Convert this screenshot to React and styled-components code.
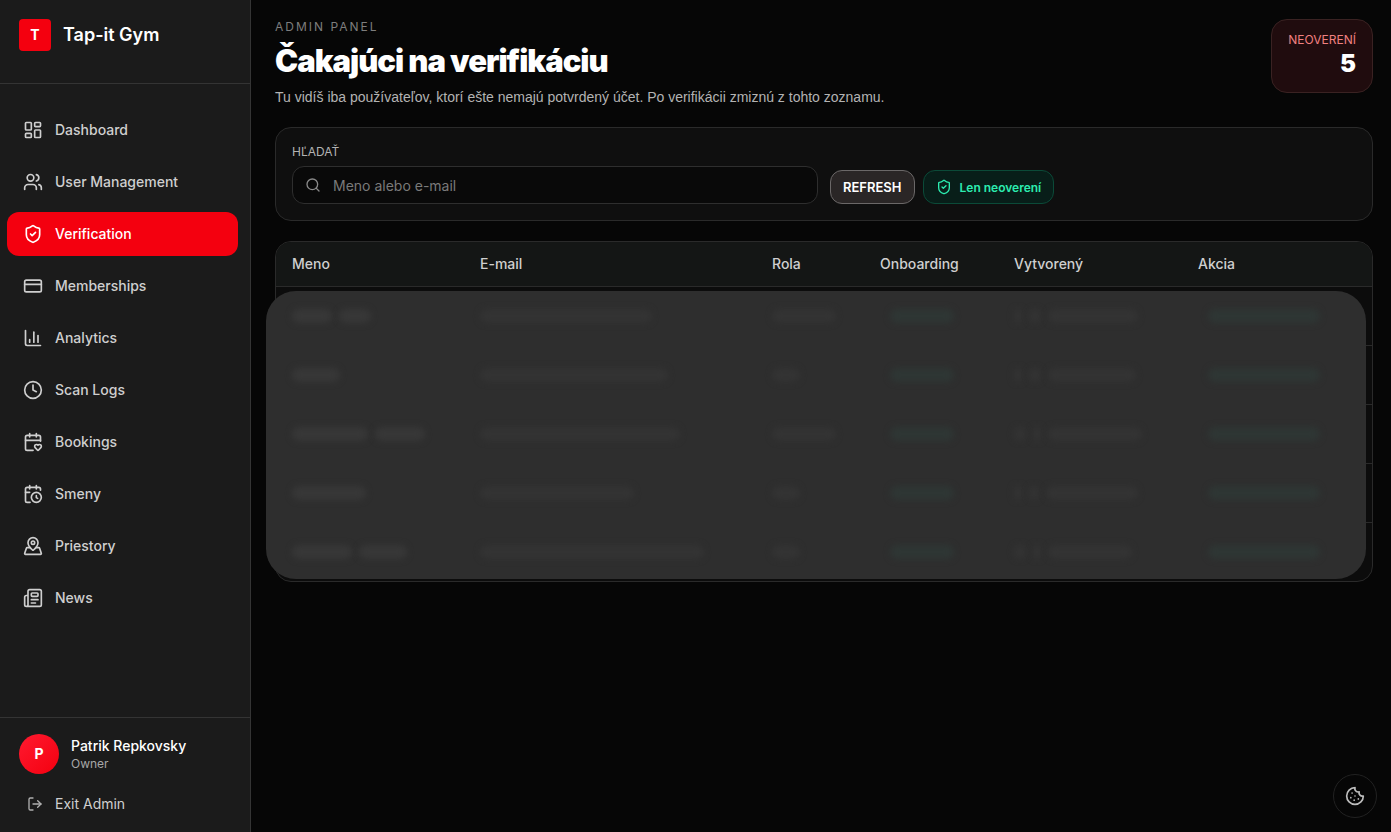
import React, { useState } from "react";
import styled, { createGlobalStyle } from "styled-components";
import {
  CalendarClock,
  CalendarHeart,
  ChartColumn,
  Clock,
  Cookie,
  CreditCard,
  LayoutDashboard,
  LogOut,
  MapPinned,
  Newspaper,
  Search,
  ShieldCheck,
  Users,
} from "lucide-react";

const NAV_ITEMS = [
  { label: "Dashboard", icon: LayoutDashboard },
  { label: "User Management", icon: Users },
  { label: "Verification", icon: ShieldCheck },
  { label: "Memberships", icon: CreditCard },
  { label: "Analytics", icon: ChartColumn },
  { label: "Scan Logs", icon: Clock },
  { label: "Bookings", icon: CalendarHeart },
  { label: "Smeny", icon: CalendarClock },
  { label: "Priestory", icon: MapPinned },
  { label: "News", icon: Newspaper },
];

const COLUMNS = [
  { label: "Meno", width: "188px" },
  { label: "E-mail", width: "292px" },
  { label: "Rola", width: "108px" },
  { label: "Onboarding", width: "134px" },
  { label: "Vytvorený", width: "184px" },
  { label: "Akcia", width: "auto" },
];

// widths of the blurred words in every row
const ROWS = [
  { name: [40, 32], email: 172, role: 64, date: [8, 12, 90] },
  { name: [48], email: 188, role: 28, date: [8, 12, 88] },
  { name: [76, 50], email: 200, role: 64, date: [12, 8, 94] },
  { name: [74], email: 154, role: 28, date: [8, 10, 92] },
  { name: [60, 48], email: 224, role: 28, date: [12, 8, 84] },
];

export default function App() {
  const [active, setActive] = useState("Verification");
  const [query, setQuery] = useState("");

  return (
    <Page>
      <GlobalStyle />
      <Sidebar>
        <Brand>
          <BrandMark>T</BrandMark>
          <BrandName>Tap-it Gym</BrandName>
        </Brand>
        <Nav>
          {NAV_ITEMS.map(({ label, icon: Icon }) => (
            <NavLink
              key={label}
              href="#"
              $active={active === label}
              onClick={() => setActive(label)}
            >
              <Icon size={20} />
              {label}
            </NavLink>
          ))}
        </Nav>
        <SidebarFooter>
          <Profile>
            <Avatar>P</Avatar>
            <div>
              <ProfileName>Patrik Repkovsky</ProfileName>
              <ProfileRole>Owner</ProfileRole>
            </div>
          </Profile>
          <ExitLink href="#">
            <LogOut size={16} />
            Exit Admin
          </ExitLink>
        </SidebarFooter>
      </Sidebar>

      <Main>
        <PageHeader>
          <div>
            <Eyebrow>ADMIN PANEL</Eyebrow>
            <Title>Čakajúci na verifikáciu</Title>
            <Description>
              Tu vidíš iba používateľov, ktorí ešte nemajú potvrdený účet. Po
              verifikácii zmiznú z tohto zoznamu.
            </Description>
          </div>
          <StatCard>
            <StatLabel>NEOVERENÍ</StatLabel>
            <StatValue>5</StatValue>
          </StatCard>
        </PageHeader>

        <FilterPanel>
          <Field>
            <FieldLabel htmlFor="search">HĽADAŤ</FieldLabel>
            <SearchBox>
              <Search size={16} />
              <SearchInput
                id="search"
                type="text"
                placeholder="Meno alebo e-mail"
                value={query}
                onChange={(e) => setQuery(e.target.value)}
              />
            </SearchBox>
          </Field>
          <FilterActions>
            <RefreshButton type="button">REFRESH</RefreshButton>
            <OnlyButton type="button">
              <ShieldCheck size={16} />
              Len neoverení
            </OnlyButton>
          </FilterActions>
        </FilterPanel>

        <TablePanel>
          <Table>
            <colgroup>
              {COLUMNS.map((column) => (
                <Column key={column.label} $width={column.width} />
              ))}
            </colgroup>
            <thead>
              <tr>
                {COLUMNS.map((column) => (
                  <HeadCell key={column.label}>{column.label}</HeadCell>
                ))}
              </tr>
            </thead>
            <tbody>
              {ROWS.map((row, index) => (
                <Row key={index}>
                  <Cell>
                    <Words>
                      {row.name.map((width, i) => (
                        <Smudge key={i} $tone="name" $width={width} />
                      ))}
                    </Words>
                  </Cell>
                  <Cell>
                    <Smudge $width={row.email} />
                  </Cell>
                  <Cell>
                    <Smudge $width={row.role} />
                  </Cell>
                  <Cell>
                    <Chip>
                      <Smudge $tone="green" $width={64} />
                    </Chip>
                  </Cell>
                  <Cell>
                    <Words>
                      {row.date.map((width, i) => (
                        <Smudge key={i} $width={width} />
                      ))}
                    </Words>
                  </Cell>
                  <Cell>
                    <Chip>
                      <Smudge $tone="green" $width={112} />
                    </Chip>
                  </Cell>
                </Row>
              ))}
            </tbody>
          </Table>
          <Veil />
        </TablePanel>
      </Main>

      <CookieButton type="button" aria-label="Cookies">
        <Cookie size={20} />
      </CookieButton>
    </Page>
  );
}

const GlobalStyle = createGlobalStyle`
  * {
    box-sizing: border-box;
  }
  body {
    margin: 0;
    background-color: #060606;
    color: #ffffff;
    font-family: "Inter", "Liberation Sans", sans-serif;
    font-size: 14px;
    line-height: 20px;
  }
  button,
  input {
    font-family: inherit;
  }
`;

const Page = styled.div`
  display: flex;
  min-height: 100vh;
`;

const Sidebar = styled.aside`
  flex: 0 0 251px;
  display: flex;
  flex-direction: column;
  background-color: #1b1b1b;
  border-right: 1px solid #343434;
`;

const Brand = styled.div`
  display: flex;
  align-items: center;
  gap: 12px;
  padding: 19px 19px 32px;
  border-bottom: 1px solid #343434;
`;

const BrandMark = styled.div`
  display: flex;
  align-items: center;
  justify-content: center;
  width: 32px;
  height: 32px;
  border-radius: 4px;
  background-color: #f4000f;
  font-weight: 700;
`;

const BrandName = styled.div`
  font-size: 18px;
  font-weight: 600;
`;

const Nav = styled.nav`
  flex: 1;
  display: flex;
  flex-direction: column;
  gap: 8px;
  padding: 24px 12px 24px 7px;
`;

const NavLink = styled.a`
  display: flex;
  align-items: center;
  gap: 12px;
  height: 44px;
  padding: 0 16px;
  border-radius: 12px;
  background-color: ${({ $active }) => ($active ? "#f4000f" : "transparent")};
  color: ${({ $active }) => ($active ? "#ffffff" : "#cfcfcf")};
  font-weight: 500;
  text-decoration: none;
`;

const SidebarFooter = styled.div`
  padding: 16px 19px 12px;
  border-top: 1px solid #343434;
`;

const Profile = styled.div`
  display: flex;
  align-items: center;
  gap: 12px;
`;

const Avatar = styled.div`
  display: flex;
  align-items: center;
  justify-content: center;
  width: 40px;
  height: 40px;
  border-radius: 50%;
  background: linear-gradient(135deg, #ff1a30, #f4000f);
  font-weight: 700;
`;

const ProfileName = styled.div`
  font-weight: 500;
`;

const ProfileRole = styled.div`
  color: #a8a8a8;
  font-size: 12px;
  line-height: 16px;
`;

const ExitLink = styled.a`
  display: flex;
  align-items: center;
  gap: 12px;
  height: 32px;
  margin-top: 14px;
  padding: 0 8px;
  color: #cfcfcf;
  text-decoration: none;

  svg {
    color: #b0b0b0;
  }
`;

const Main = styled.main`
  flex: 1;
  min-width: 0;
  padding: 19px 18px 24px 24px;
`;

const PageHeader = styled.header`
  display: flex;
  align-items: flex-start;
  justify-content: space-between;
  margin-bottom: 20px;
`;

const Eyebrow = styled.div`
  color: #7d7d7d;
  font-size: 12px;
  line-height: 16px;
  letter-spacing: 2px;
`;

const Title = styled.h1`
  margin: 8px 0;
  font-size: 31px;
  font-weight: 900;
  line-height: 36px;
  letter-spacing: -1px;
`;

const Description = styled.p`
  margin: 0;
  color: #b3b3b3;
  font-family: "Liberation Sans", sans-serif;
`;

const StatCard = styled.div`
  padding: 12px 16px;
  border: 1px solid #3a2222;
  border-radius: 16px;
  background-color: #200c0e;
  text-align: right;
`;

const StatLabel = styled.div`
  color: #f08080;
  font-size: 12px;
  line-height: 16px;
`;

const StatValue = styled.div`
  font-size: 24px;
  font-weight: 900;
  line-height: 32px;
`;

const FilterPanel = styled.section`
  display: flex;
  align-items: flex-end;
  gap: 12px;
  margin-bottom: 20px;
  padding: 16px;
  border: 1px solid #2a2a2a;
  border-radius: 16px;
  background-color: #0f0f0f;
`;

const Field = styled.div`
  flex: 0 1 526px;
`;

const FieldLabel = styled.label`
  display: block;
  margin-bottom: 6px;
  color: #b3b3b3;
  font-size: 12px;
  line-height: 16px;
`;

const SearchBox = styled.div`
  display: flex;
  align-items: center;
  gap: 12px;
  height: 38px;
  padding: 0 12px;
  border: 1px solid #2e2e2e;
  border-radius: 12px;
  background-color: #090909;
  color: #8a8a8a;
`;

const SearchInput = styled.input`
  flex: 1;
  min-width: 0;
  padding: 0;
  border: none;
  outline: none;
  background: transparent;
  color: #ffffff;
  font-size: 14px;

  &::placeholder {
    color: #7a7a7a;
    opacity: 1;
  }
`;

const FilterActions = styled.div`
  display: flex;
  gap: 8px;
`;

const ActionButton = styled.button`
  display: flex;
  align-items: center;
  gap: 8px;
  height: 34px;
  padding: 0 12px;
  border-radius: 12px;
  font-size: 12px;
  font-weight: 600;
  cursor: pointer;
`;

const RefreshButton = styled(ActionButton)`
  border: 1px solid #6b6868;
  background-color: #2a2626;
  color: #ffffff;
  font-size: 13px;
`;

const OnlyButton = styled(ActionButton)`
  border: 1px solid #0b4a38;
  background-color: #081e19;
  color: #2cecb0;
`;

const TablePanel = styled.section`
  position: relative;
  border: 1px solid #2a2a2a;
  border-radius: 16px;
  background-color: #0c0c0c;
`;

const Table = styled.table`
  width: 100%;
  table-layout: fixed;
  border-collapse: separate;
  border-spacing: 0;
`;

const Column = styled.col`
  width: ${({ $width }) => $width};
`;

const HeadCell = styled.th`
  height: 45px;
  padding: 0 16px;
  border-bottom: 1px solid #2a2a2a;
  background-color: #141615;
  color: #cfcfcf;
  font-weight: 500;
  text-align: left;

  &:first-child {
    border-top-left-radius: 15px;
  }
  &:last-child {
    border-top-right-radius: 15px;
  }
`;

const Cell = styled.td`
  height: 59px;
  padding: 0 16px;
  border-bottom: 1px solid #2a2a2a;
`;

const Row = styled.tr`
  &:last-child ${Cell} {
    height: 58px;
    border-bottom: none;
  }
`;

const Words = styled.div`
  display: flex;
  gap: 7px;
`;

const Chip = styled.div`
  padding: 0 10px;
`;

const SMUDGE_COLORS = {
  name: "#373737",
  green: "#2e3634",
  plain: "#333333",
};

const Smudge = styled.span`
  position: relative;
  z-index: 2;
  display: block;
  width: ${({ $width }) => $width}px;
  height: 14px;
  border-radius: 7px;
  background-color: ${({ $tone }) => SMUDGE_COLORS[$tone || "plain"]};
  filter: blur(3px);
`;

const Veil = styled.div`
  position: absolute;
  z-index: 1;
  top: 49px;
  right: 6px;
  bottom: 2px;
  left: -10px;
  border-radius: 30px;
  background-color: #2e2e2e;
`;

const CookieButton = styled.button`
  position: fixed;
  right: 14px;
  bottom: 14px;
  display: flex;
  align-items: center;
  justify-content: center;
  width: 44px;
  height: 44px;
  padding: 0;
  border: 1px solid #222222;
  border-radius: 50%;
  background-color: #060606;
  color: #bdbdbd;
  cursor: pointer;
`;
